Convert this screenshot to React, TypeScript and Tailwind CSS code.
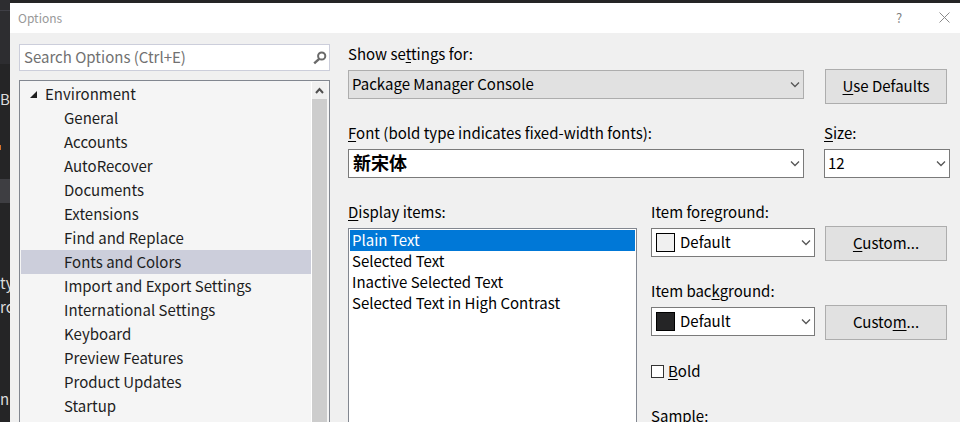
import { useState, type ReactNode } from "react";

const pages = [
  "General",
  "Accounts",
  "AutoRecover",
  "Documents",
  "Extensions",
  "Find and Replace",
  "Fonts and Colors",
  "Import and Export Settings",
  "International Settings",
  "Keyboard",
  "Preview Features",
  "Product Updates",
  "Startup",
];

const displayItems = [
  "Plain Text",
  "Selected Text",
  "Inactive Selected Text",
  "Selected Text in High Contrast",
];

function Key({ children }: { children: ReactNode }) {
  return <span className="underline decoration-1 underline-offset-2">{children}</span>;
}

function Chevron() {
  return (
    <svg
      className="pointer-events-none absolute top-[11px] right-[3px] h-2 w-3"
      viewBox="0 0 12 8"
      fill="none"
      stroke="#555"
      strokeWidth="1.3"
      aria-hidden="true"
    >
      <path d="M2 1.5 6 5.5 10 1.5" />
    </svg>
  );
}

function Dropdown({
  id,
  options,
  muted = false,
  cjk = false,
  swatch,
}: {
  id: string;
  options: string[];
  muted?: boolean;
  cjk?: boolean;
  swatch?: string;
}) {
  return (
    <div className="relative">
      {swatch && (
        <span
          className={`pointer-events-none absolute top-[5px] left-[5px] size-[19px] border border-black ${swatch}`}
        />
      )}
      <select
        id={id}
        className={`block h-[29px] w-full appearance-none border pr-5 ${
          muted ? "border-[#adadad] bg-[#e1e1e1]" : "border-[#7a7a7a] bg-white"
        } ${swatch ? "pl-7" : cjk ? "pl-1" : "pl-[3px]"} ${
          cjk ? "pb-1 text-[18px] leading-6 font-bold" : ""
        }`}
      >
        {options.map((o) => (
          <option key={o}>{o}</option>
        ))}
      </select>
      <Chevron />
    </div>
  );
}

function PushButton({ children }: { children: ReactNode }) {
  return (
    <button
      type="button"
      className="h-[35px] w-[122px] shrink-0 border border-[#adadad] bg-[#e1e1e1] pb-px text-center"
    >
      {children}
    </button>
  );
}

function EditorStrip() {
  return (
    <div
      className="flex w-[10px] shrink-0 flex-col overflow-hidden bg-[#252526] text-[15px] leading-6 text-[#dcdcdc]"
      aria-hidden="true"
    >
      <div className="h-16 shrink-0 bg-[#2d2d30] pt-[10px]">
        <div className="h-px bg-[#3f3f46]" />
      </div>
      <div className="h-[23px] shrink-0" />
      <div className="h-6 shrink-0">B</div>
      <div className="h-6 shrink-0" />
      <div className="h-6 shrink-0 pt-[10px]">
        <div className="h-[5px] w-px bg-[#d7702a]" />
      </div>
      <div className="h-5 shrink-0" />
      <div className="h-6 shrink-0 bg-[#3e3e42]" />
      <div className="h-[68px] shrink-0" />
      <div className="h-6 shrink-0">ty</div>
      <div className="h-6 shrink-0">rc</div>
      <div className="h-[68px] shrink-0" />
      <div className="h-6 shrink-0">n</div>
    </div>
  );
}

function Sidebar() {
  const [page, setPage] = useState("Fonts and Colors");
  return (
    <div className="flex w-[311px] shrink-0 flex-col gap-[9px] pt-[11px]">
      <div className="flex h-[27px] shrink-0 items-center border border-[#cccedb] bg-white pr-[2px] pl-1">
        <input
          type="text"
          aria-label="Search Options"
          placeholder="Search Options (Ctrl+E)"
          className="min-w-0 flex-1 bg-transparent outline-none placeholder:text-[#717171]"
        />
        <svg className="size-[14px]" viewBox="0 0 14 14" fill="none" stroke="#6a6a6a" aria-hidden="true">
          <circle cx="8.7" cy="5" r="3.6" strokeWidth="2" />
          <path d="M6.2 7.8 1.2 12.4" strokeWidth="2.4" />
        </svg>
      </div>
      <div className="flex min-h-0 flex-1 overflow-hidden border border-b-0 border-[#828790] bg-[#f5f5f5] px-px pt-px">
        <ul role="tree" aria-label="Option pages" className="min-w-0 flex-1 leading-6 text-[#1e1e1e]">
          <li role="treeitem" aria-expanded="true">
            <div className="flex h-6 items-center gap-2 pl-[9px]">
              <svg className="size-[7px]" viewBox="0 0 7 7" fill="#1e1e1e" aria-hidden="true">
                <path d="M7 0v7H0z" />
              </svg>
              Environment
            </div>
            <ul role="group">
              {pages.map((p) => (
                <li
                  key={p}
                  role="treeitem"
                  aria-selected={p === page}
                  onClick={() => setPage(p)}
                  className={`h-6 pl-[43px] ${p === page ? "bg-[#cccedb]" : ""}`}
                >
                  {p}
                </li>
              ))}
            </ul>
          </li>
        </ul>
        <div className="mr-px flex w-4 shrink-0 flex-col border-l border-white bg-[#f0f0f0]">
          <svg className="h-[17px] w-[15px] shrink-0" viewBox="0 0 15 17" fill="none" stroke="#505050" strokeWidth="2" aria-hidden="true">
            <path d="M4 11 7.5 7 11 11" />
          </svg>
          <div className="flex-1 bg-[#cdcdcd]" />
        </div>
      </div>
    </div>
  );
}

function FontsAndColors() {
  const [item, setItem] = useState("Plain Text");
  const [bold, setBold] = useState(false);
  return (
    <form className="flex min-w-0 flex-1 flex-col pt-[9px] pr-[10px]">
      <div className="flex h-[79px] shrink-0 gap-5">
        <div className="min-w-0 flex-1">
          <label htmlFor="settings" className="block pb-1 leading-6">
            Show se<Key>t</Key>tings for:
          </label>
          <Dropdown id="settings" muted options={["Package Manager Console", "Text Editor"]} />
        </div>
        <div className="w-[126px] shrink-0 pt-[27px] pl-px">
          <PushButton>
            <Key>U</Key>se Defaults
          </PushButton>
        </div>
      </div>
      <div className="flex h-[79px] shrink-0 gap-5">
        <div className="min-w-0 flex-1">
          <label htmlFor="font" className="block pb-1 leading-6">
            <Key>F</Key>ont (bold type indicates fixed-width fonts):
          </label>
          <Dropdown id="font" cjk options={["新宋体"]} />
        </div>
        <div className="w-[126px] shrink-0">
          <label htmlFor="size" className="block pb-1 leading-6">
            <Key>S</Key>ize:
          </label>
          <Dropdown id="size" options={["12", "14", "16"]} />
        </div>
      </div>
      <div className="flex min-h-0 flex-1 gap-[14px] pr-[3px]">
        <div className="flex min-w-0 flex-1 flex-col">
          <span id="items-label" className="pb-1 leading-6">
            <Key>D</Key>isplay items:
          </span>
          <ul
            role="listbox"
            aria-labelledby="items-label"
            className="flex-1 border border-b-0 border-[#828790] bg-white p-px leading-5"
          >
            {displayItems.map((d) => (
              <li
                key={d}
                role="option"
                aria-selected={d === item}
                onClick={() => setItem(d)}
                className={`h-[21px] pl-[2px] ${d === item ? "bg-[#0078d7] text-white" : ""}`}
              >
                {d}
              </li>
            ))}
          </ul>
        </div>
        <div className="flex w-[296px] shrink-0 flex-col">
          <div className="flex h-[79px] shrink-0 gap-[10px]">
            <div className="min-w-0 flex-1">
              <label htmlFor="fg" className="block pb-1 leading-6">
                Item fo<Key>r</Key>eground:
              </label>
              <Dropdown id="fg" swatch="bg-[#f0f0f0]" options={["Default", "Automatic"]} />
            </div>
            <div className="pt-[26px]">
              <PushButton>
                <Key>C</Key>ustom...
              </PushButton>
            </div>
          </div>
          <div className="flex h-20 shrink-0 gap-[10px]">
            <div className="min-w-0 flex-1">
              <label htmlFor="bg" className="block pb-1 leading-6">
                Item bac<Key>k</Key>ground:
              </label>
              <Dropdown id="bg" swatch="bg-[#252526]" options={["Default", "Automatic"]} />
            </div>
            <div className="pt-[26px]">
              <PushButton>
                Custo<Key>m</Key>...
              </PushButton>
            </div>
          </div>
          <label className="flex h-[45px] shrink-0 items-start gap-1 leading-6">
            <input
              type="checkbox"
              checked={bold}
              onChange={(e) => setBold(e.target.checked)}
              className="mt-[6px] size-[13px] appearance-none border border-[#333] bg-white checked:bg-[#0078d7]"
            />
            <span>
              <Key>B</Key>old
            </span>
          </label>
          <span className="shrink-0 leading-6">Sample:</span>
        </div>
      </div>
    </form>
  );
}

export default function App() {
  return (
    <div className="flex h-screen overflow-hidden bg-[#252526] font-['Noto_Sans_CJK_SC','Noto_Sans',sans-serif] text-[15px] text-black">
      <EditorStrip />
      <main className="mt-[3px] flex min-w-0 flex-1 flex-col bg-[#f0f0f0]">
        <header className="flex h-[30px] shrink-0 items-center bg-white pr-[10px] pb-px pl-2 text-[12px] text-[#999]">
          <h1 className="flex-1">Options</h1>
          <button type="button" aria-label="Help" className="mr-[34px] w-3 text-[13px] text-[#808080]">
            ?
          </button>
          <button type="button" aria-label="Close">
            <svg className="size-[11px]" viewBox="0 0 11 11" stroke="#8a8a8a" aria-hidden="true">
              <path d="M.5.5l10 10M10.5.5l-10 10" />
            </svg>
          </button>
        </header>
        <div className="flex min-h-0 flex-1 gap-[18px] pl-[9px]">
          <Sidebar />
          <FontsAndColors />
        </div>
      </main>
    </div>
  );
}
